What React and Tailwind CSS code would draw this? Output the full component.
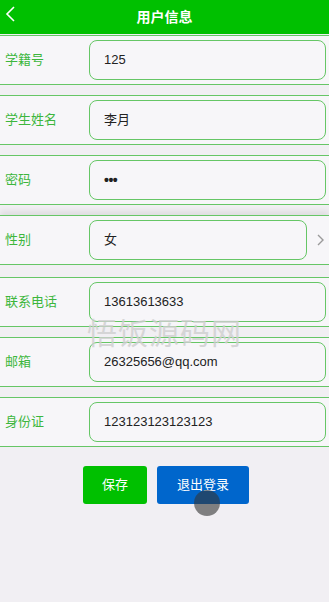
import React from 'react';

const fields = [
  { label: '学籍号', value: '125' },
  { label: '学生姓名', value: '李月' },
  { label: '密码', value: '•••', password: true },
  { label: '性别', value: '女', select: true },
  { label: '联系电话', value: '13613613633', afterSelect: true },
  { label: '邮箱', value: '26325656@qq.com' },
  { label: '身份证', value: '123123123123123' },
];

function Row({ field, first }) {
  const gap = first ? 'mt-[1px]' : field.afterSelect ? 'mt-[12px]' : 'mt-[10px]';
  return (
    <div
      className={`flex items-center h-[50px] bg-[#f7f6f9] border-y border-[#66c666] ${gap} ${
        field.select ? 'shadow-[0_-4px_6px_rgba(0,0,0,0.08)]' : ''
      }`}
    >
      <div className="w-[89px] pl-[5px] text-[13px] text-[#3db63d]">{field.label}</div>
      <div
        className={`h-[40px] flex items-center pl-[14px] rounded-[8px] border border-[#66c666] bg-[#f7f6f9] text-[13px] text-[#222] ${
          field.select ? 'w-[218px]' : 'w-[237px]'
        }`}
      >
        {field.password ? <span className="tracking-[-0.5px] text-[14px] font-bold">{field.value}</span> : field.value}
      </div>
      {field.select && (
        <svg className="ml-[9px]" width="9" height="14" viewBox="0 0 9 14" fill="none">
          <path d="M2 2l5 5-5 5" stroke="#9a9a9a" strokeWidth="1.4" />
        </svg>
      )}
    </div>
  );
}

export default function App() {
  return (
    <div
      className="relative w-[329px] h-[602px] bg-[#f1eff3] overflow-hidden"
      style={{ fontFamily: '"Liberation Sans", "Noto Sans CJK SC", sans-serif' }}
    >
      <div className="relative h-[34px] bg-[#00c000] flex items-center justify-center">
        <svg className="absolute left-[4px] top-[5px]" width="12" height="18" viewBox="0 0 12 18" fill="none">
          <path d="M10 2L3 9l7 7" stroke="white" strokeWidth="1.6" />
        </svg>
        <span className="text-white text-[14px] font-bold">用户信息</span>
      </div>

      {fields.map((f, i) => (
        <Row key={f.label} field={f} first={i === 0} />
      ))}

      <div className="flex gap-[10px] pl-[83px] mt-[19px]">
        <button className="w-[64px] h-[38px] rounded-[3px] bg-[#00c000] text-white text-[13px]">保存</button>
        <button className="w-[92px] h-[38px] rounded-[3px] bg-[#0066cc] text-white text-[13px]">退出登录</button>
      </div>

      <div
        className="pointer-events-none absolute left-0 right-0 top-[316px] leading-none text-center text-[30px] text-[#cfcfcf] opacity-80 tracking-[1px]"
        style={{ fontFamily: '"Noto Sans CJK SC", serif' }}
      >
        悟饭源码网
      </div>
      <div className="pointer-events-none absolute left-[194px] top-[490px] w-[26px] h-[26px] rounded-full bg-[#333]/60" />
    </div>
  );
}
